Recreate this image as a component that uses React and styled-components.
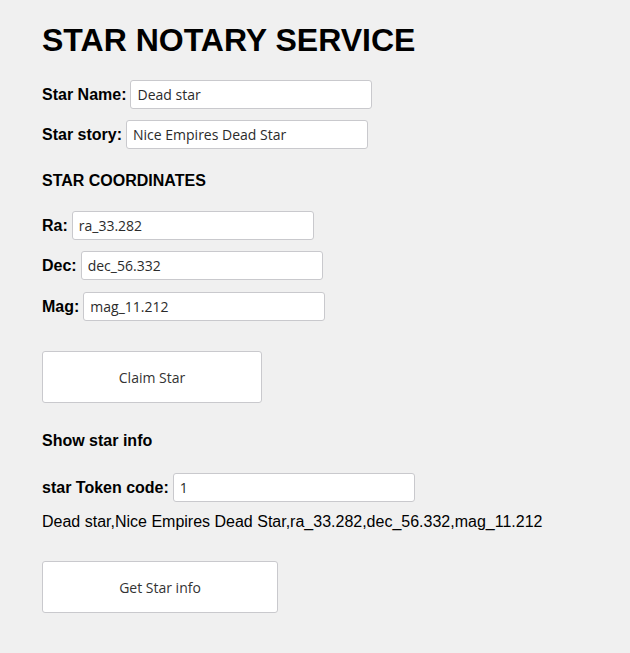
import styled, { createGlobalStyle } from 'styled-components';

const GlobalStyle = createGlobalStyle`
  html, body {
    margin: 0;
    padding: 0;
    background: #f0f0f0;
  }
  body {
    font-family: "Liberation Sans", Arial, sans-serif;
    color: #000;
  }
`;

const Page = styled.main`
  display: flex;
  flex-direction: column;
  align-items: flex-start;
  padding: 22px 0 40px 42px;
`;

const Title = styled.h1`
  margin: 0;
  font-size: 32px;
  line-height: 36px;
  font-weight: bold;
`;

const Row = styled.div`
  display: flex;
  align-items: center;
  gap: 4px;
  height: 29px;
  margin-top: ${({top}) => top}px;
`;

const Label = styled.label`
  font-size: 16px;
  font-weight: bold;
`;

const Input = styled.input`
  box-sizing: border-box;
  width: 242px;
  height: 29px;
  padding: 0 6px;
  border: 1px solid #c9c9cd;
  border-radius: 3px;
  background: #fff;
  color: #2b2b2b;
  font-family: "Open Sans", "Noto Sans", sans-serif;
  font-size: 14px;
  outline: none;
`;

const Heading = styled.h3`
  margin: ${({top}) => top}px 0 0;
  font-size: 16px;
  line-height: 20px;
  font-weight: bold;
`;

const Result = styled.p`
  margin: ${({top}) => top}px 0 0;
  font-size: 16px;
  line-height: 20px;
`;

const Button = styled.button`
  box-sizing: border-box;
  width: ${({width}) => width}px;
  height: 52px;
  margin-top: ${({top}) => top}px;
  border: 1px solid #c9c9cd;
  border-radius: 3px;
  background: #fff;
  color: #333;
  font-family: "Open Sans", "Noto Sans", sans-serif;
  font-size: 14px;
  cursor: pointer;
`;

export default function App() {
  return (
    <>
      <GlobalStyle />
      <Page>
        <Title>STAR NOTARY SERVICE</Title>

        <Row top={22}>
          <Label>Star Name:</Label>
          <Input defaultValue="Dead star" />
        </Row>
        <Row top={11}>
          <Label>Star story:</Label>
          <Input defaultValue="Nice Empires Dead Star" />
        </Row>

        <Heading top={22}>STAR COORDINATES</Heading>

        <Row top={20}>
          <Label>Ra:</Label>
          <Input defaultValue="ra_33.282" />
        </Row>
        <Row top={11}>
          <Label>Dec:</Label>
          <Input defaultValue="dec_56.332" />
        </Row>
        <Row top={12}>
          <Label>Mag:</Label>
          <Input defaultValue="mag_11.212" />
        </Row>

        <Button top={30} width={220}>Claim Star</Button>

        <Heading top={28}>Show star info</Heading>

        <Row top={22}>
          <Label>star Token code:</Label>
          <Input defaultValue="1" />
        </Row>

        <Result top={10}>Dead star,Nice Empires Dead Star,ra_33.282,dec_56.332,mag_11.212</Result>

        <Button top={29} width={236}>Get Star info</Button>
      </Page>
    </>
  );
}
